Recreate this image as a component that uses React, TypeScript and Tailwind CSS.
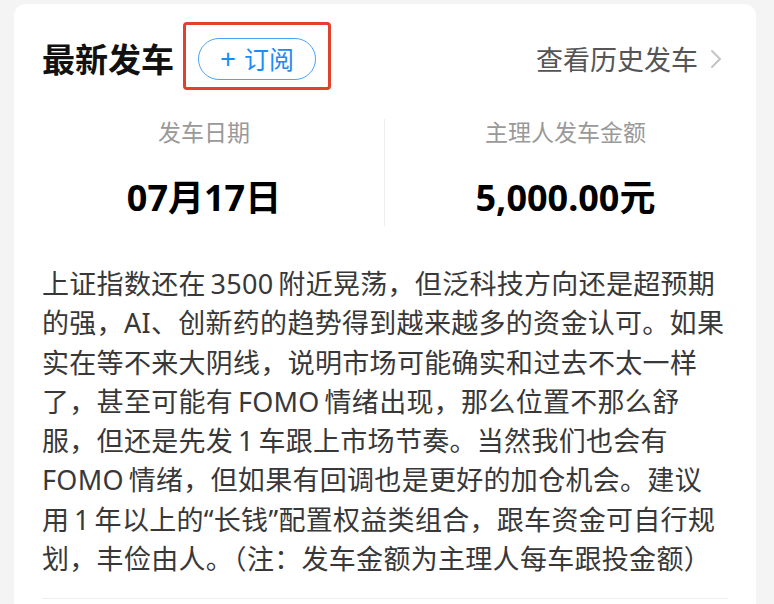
import React from 'react';

const FONT = "font-['Noto_Sans','Noto_Sans_CJK_SC',sans-serif]";

const STATS = [
  { label: '发车日期', value: '07月17日' },
  { label: '主理人发车金额', value: '5,000.00元' },
];

// thin spaces around latin runs, like the native text rendering
const NOTE =
  '上证指数还在\u20093500\u2009附近晃荡，但泛科技方向还是超预期的强，AI、创新药的趋势得到越来越多的资金认可。如果实在等不来大阴线，说明市场可能确实和过去不太一样了，甚至可能有\u2009FOMO\u2009情绪出现，那么位置不那么舒服，但还是先发\u20091\u2009车跟上市场节奏。当然我们也会有\u2009FOMO\u2009情绪，但如果有回调也是更好的加仓机会。建议用\u20091\u2009年以上的“长钱”配置权益类组合，跟车资金可自行规划，丰俭由人。（注：发车金额为主理人每车跟投金额）';

const App: React.FC = () => {
  return (
    <div className={`w-[774px] h-[604px] overflow-hidden bg-[#f4f4f4] pt-1 pl-[14px] pr-[18px] ${FONT}`}>
      <div className="bg-white rounded-xl min-h-[620px]">
        {/* Header */}
        <div className="flex items-center justify-between pl-7 pr-[34px] pt-[34px] h-[84px] pb-2">
          <div className="flex items-center">
            <h2 className="text-[33px] leading-none font-bold text-[#111]">最新发车</h2>
            <div className="relative ml-[24px]">
              <button className="h-[42px] w-[118px] rounded-full border border-[#4ea2f7] text-[#1c8cf5] text-[25px] leading-none flex items-center justify-center gap-2">
                <span className="text-[28px] leading-none -mt-[2px]">+</span>
                <span>订阅</span>
              </button>
              {/* annotation box */}
              <div className="absolute -left-[15px] -top-[16px] w-[148px] h-[68px] border-[3px] border-[#e2412c] rounded-[4px] pointer-events-none" />
            </div>
          </div>
          <a className="flex items-center gap-3 text-[27px] leading-none text-[#555]">
            查看历史发车
            <svg width="12" height="20" viewBox="0 0 12 20" fill="none">
              <polyline points="2,2 10,10 2,18" stroke="#c4c4c4" strokeWidth="2" strokeLinecap="round" strokeLinejoin="round" />
            </svg>
          </a>
        </div>

        {/* Stats */}
        <div className="grid grid-cols-2 px-[10px] mt-[31px]">
          {STATS.map((s, i) => (
            <div key={i} className={`flex flex-col items-center pt-[2px] pb-[10px] ${i === 0 ? 'border-r border-[#eeeeee]' : ''}`}>
              <span className="text-[23px] leading-none text-[#999]">{s.label}</span>
              <span className="mt-[36px] text-[36px] leading-none font-bold text-black">{s.value}</span>
            </div>
          ))}
        </div>

        {/* Note */}
        <p className="px-7 mt-[38px] text-[27px] leading-[39.3px] tracking-[0.3px] text-[#383838] w-[742px]">
          {NOTE}
        </p>
        <div className="mx-7 mt-[20px] border-t border-[#eeeeee]" />
      </div>
    </div>
  );
};

export default App;
